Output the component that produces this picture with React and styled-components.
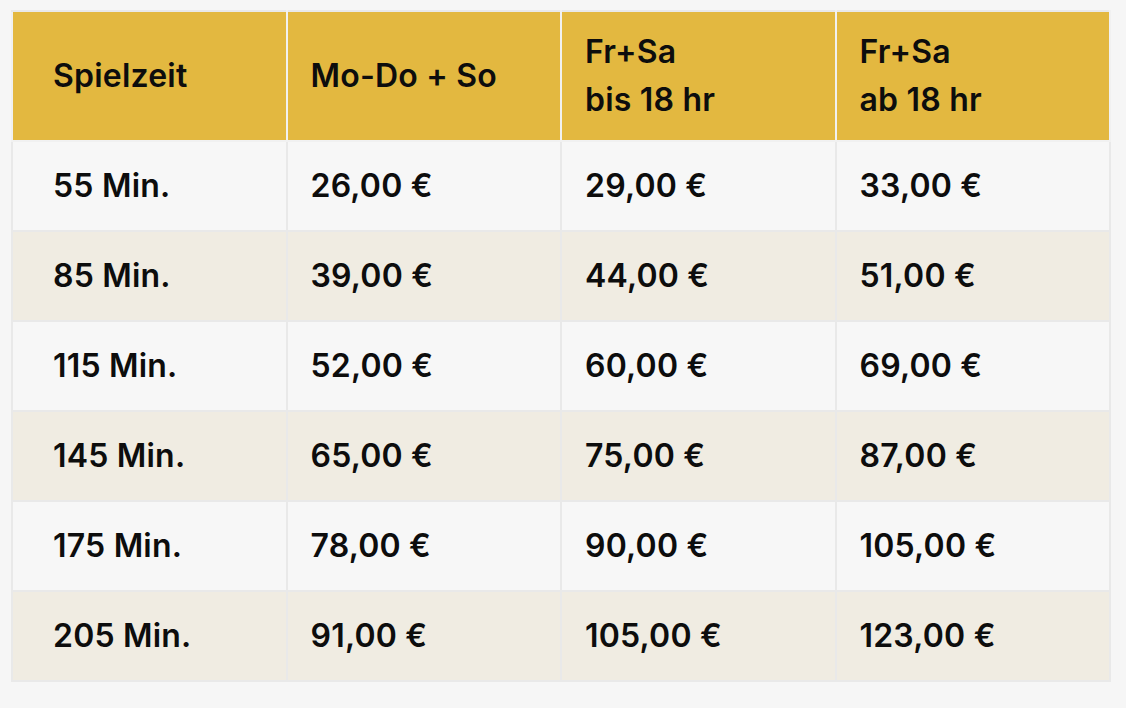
import React from "react";
import styled, { createGlobalStyle } from "styled-components";

const Global = createGlobalStyle`
  html, body { margin: 0; padding: 0; background: #f6f6f6; }
  body { font-family: Inter, "Noto Sans", sans-serif; color: #0d0d0d; }
`;

const Page = styled.div`
  padding: 10px 0 0 11px;
`;

const Table = styled.table`
  width: 1100px;
  border-collapse: collapse;
  table-layout: fixed;
  border: 2px solid #e9e9e9;
`;

const HeadCell = styled.th`
  background: #e3b840;
  height: 128px;
  padding: 0 0 0 ${(p) => (p.$first ? "40px" : "23px")};
  border: 2px solid #f1f1f1;
  border-top-color: #e9e9e9;
  text-align: left;
  vertical-align: middle;
  font-size: 32px;
  font-weight: 600;
  line-height: 48px;
  letter-spacing: 0.2px;
`;

const Row = styled.tr`
  background: ${(p) => (p.$alt ? "#f0ece2" : "#f7f7f7")};
`;

const Cell = styled.td`
  height: 88px;
  padding: 0 0 0 ${(p) => (p.$first ? "40px" : "23px")};
  border: 2px solid #e9e9e9;
  vertical-align: middle;
  font-size: 32px;
  font-weight: 600;
  line-height: 48px;
  letter-spacing: 0.2px;
`;

const headers = [["Spielzeit"], ["Mo-Do + So"], ["Fr+Sa", "bis 18 hr"], ["Fr+Sa", "ab 18 hr"]];

const rows = [
  ["55 Min.", "26,00 €", "29,00 €", "33,00 €"],
  ["85 Min.", "39,00 €", "44,00 €", "51,00 €"],
  ["115 Min.", "52,00 €", "60,00 €", "69,00 €"],
  ["145 Min.", "65,00 €", "75,00 €", "87,00 €"],
  ["175 Min.", "78,00 €", "90,00 €", "105,00 €"],
  ["205 Min.", "91,00 €", "105,00 €", "123,00 €"],
];

export default function App() {
  return (
    <>
      <Global />
      <Page>
        <Table>
          <thead>
            <tr>
              {headers.map((h, i) => (
                <HeadCell key={i} $first={i === 0}>
                  {h.map((line, j) => (
                    <React.Fragment key={j}>
                      {j > 0 && <br />}
                      {line}
                    </React.Fragment>
                  ))}
                </HeadCell>
              ))}
            </tr>
          </thead>
          <tbody>
            {rows.map((r, i) => (
              <Row key={i} $alt={i % 2 === 1}>
                {r.map((c, j) => (
                  <Cell key={j} $first={j === 0}>
                    {c}
                  </Cell>
                ))}
              </Row>
            ))}
          </tbody>
        </Table>
      </Page>
    </>
  );
}
